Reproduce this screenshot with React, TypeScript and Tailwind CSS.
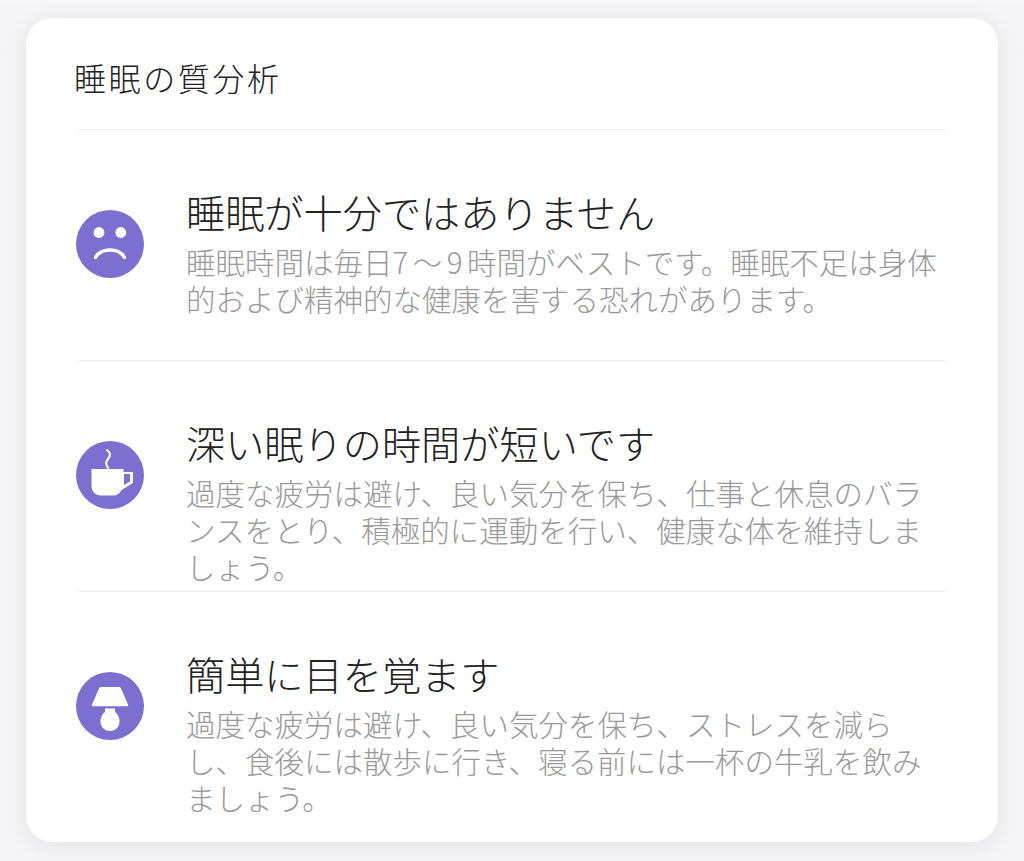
const font = { fontFamily: '"Noto Sans CJK JP", "Noto Sans", sans-serif' };

function SadIcon() {
  return (
    <svg viewBox="0 0 68 68" className="h-full w-full">
      <circle cx="34" cy="34" r="34" fill="#7d6fcf" />
      <circle cx="23" cy="22.5" r="5.4" fill="#fff" />
      <circle cx="44.8" cy="22.5" r="5.4" fill="#fff" />
      <path d="M19.5 47.5 C25 37.5 43 37.5 48.5 47.5" fill="none" stroke="#fff" strokeWidth="3.4" strokeLinecap="round" />
    </svg>
  );
}

function CupIcon() {
  return (
    <svg viewBox="0 0 68 68" className="h-full w-full">
      <circle cx="34" cy="34" r="34" fill="#7d6fcf" />
      <path d="M31 9 C35 12 34.5 15 32 18 C29.5 21 29.5 24 32.3 27" fill="none" stroke="#fff" strokeWidth="2" strokeLinecap="round" />
      <path d="M15.5 28 H47.5 V31 H57 V42 L45.5 49 C44 52.5 41 54.5 37 54.5 H25 C19.5 54.5 15.5 50.5 15.5 45 Z" fill="#fff" />
      <path d="M48 33 H54 V40.5 L48 44 Z" fill="#7d6fcf" />
    </svg>
  );
}

function LampIcon() {
  return (
    <svg viewBox="0 0 68 68" className="h-full w-full">
      <circle cx="34" cy="34" r="34" fill="#7d6fcf" />
      <path d="M24.5 15 H43 C44 15 44.5 15.5 45 16.5 L52 32.5 C52.5 33.7 52 34.3 51 34.3 H17 C16 34.3 15.5 33.7 16 32.5 L23 16.5 C23.5 15.5 24 15 24.5 15 Z" fill="#fff" />
      <path d="M29 36.5 H39 V40 C41.5 41.5 43.5 45 43.5 49.5 C43.5 55 39.5 59 34 59 C28.5 59 24.5 55 24.5 49.5 C24.5 45 26.5 41.5 29 40 Z" fill="#fff" />
    </svg>
  );
}

const rows = [
  {
    icon: <SadIcon />,
    title: "睡眠が十分ではありません",
    lines: [
      <>
        睡眠時間は毎日<span className="tracking-[4.5px]">7〜9</span>時間がベストです。睡眠不足は身体
      </>,
      "的および精神的な健康を害する恐れがあります。",
    ],
    height: "h-[231px]",
  },
  {
    icon: <CupIcon />,
    title: "深い眠りの時間が短いです",
    lines: ["過度な疲労は避け、良い気分を保ち、仕事と休息のバラ", "ンスをとり、積極的に運動を行い、健康な体を維持しま", "しょう。"],
    height: "h-[231px]",
  },
  {
    icon: <LampIcon />,
    title: "簡単に目を覚ます",
    lines: ["過度な疲労は避け、良い気分を保ち、ストレスを減ら", "し、食後には散歩に行き、寝る前には一杯の牛乳を飲み", "ましょう。"],
    height: "h-[250px]",
  },
];

export default function App() {
  return (
    <div className="h-[861px] w-[1024px] overflow-hidden border-t-2 border-[#f9f9fa] bg-[#f5f5f7] pl-[26px] pt-[16px]" style={font}>
      <div className="h-[824px] w-[972px] rounded-[26px] bg-white shadow-[0_3px_24px_rgba(40,40,80,0.09)]">
        <div className="flex h-[111px] items-center pl-[48px] pt-[6px] text-[32px] font-light leading-none tracking-[2.6px] text-[#222]">
          睡眠の質分析
        </div>
        {rows.map((row) => (
          <div key={row.title} className={`${row.height} mx-[53px] border-t border-[#ebebeb]`}>
            <div className="flex items-start pt-[58px]">
              <div className="ml-[-3px] mt-[22px] h-[68px] w-[68px] shrink-0">{row.icon}</div>
              <div className="ml-[42px] whitespace-nowrap">
                <div className="h-[46px] text-[39.2px] font-light leading-[46px] text-[#222]">{row.title}</div>
                <div className="mt-[9px] text-[29.5px] font-light leading-[37px] text-[#999]">
                  {row.lines.map((line, i) => (
                    <div key={i}>{line}</div>
                  ))}
                </div>
              </div>
            </div>
          </div>
        ))}
      </div>
    </div>
  );
}
